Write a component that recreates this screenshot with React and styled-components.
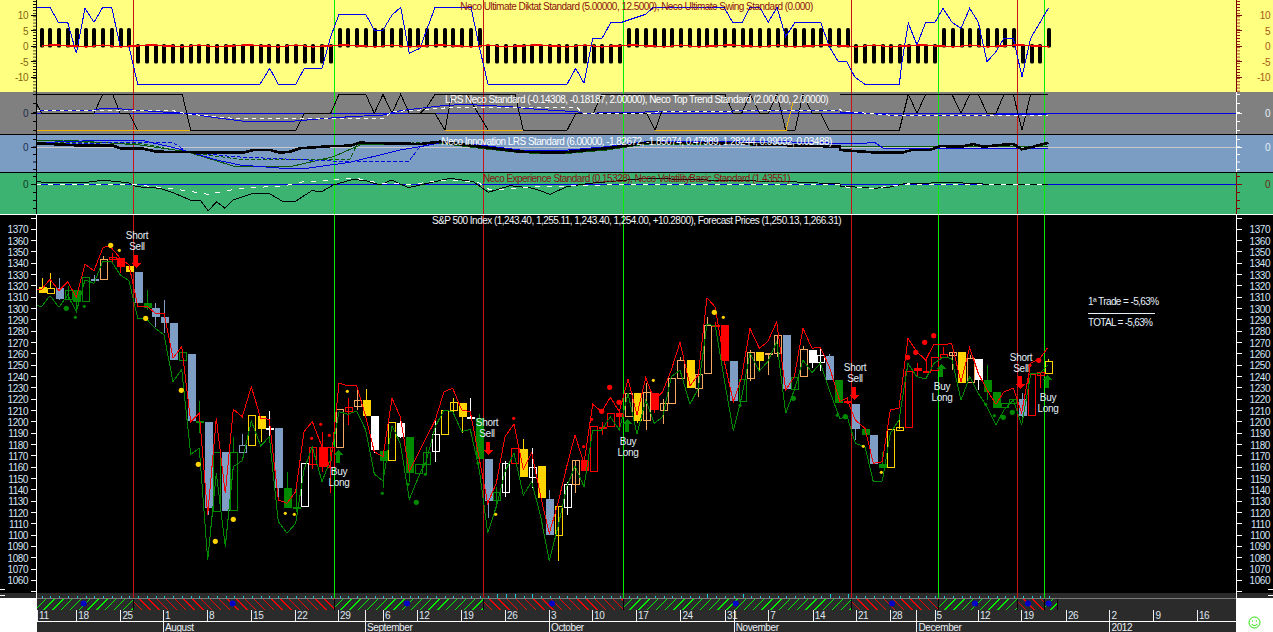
import React from 'react';
import styled, { createGlobalStyle } from 'styled-components';

const Global = createGlobalStyle`
  html, body { margin: 0; padding: 0; background: #fff; overflow: hidden; }
  body { font-family: "Liberation Sans", Arial, sans-serif; }
`;

const Page = styled.div`
  width: 1273px;
  height: 632px;
  display: flex;
  flex-direction: column;
  overflow: hidden;
`;

const Pane = styled.section`
  display: flex;
  box-sizing: border-box;
  height: ${p => p.$h}px;
  background: ${p => p.$bg};
  border-bottom: ${p => (p.$rule ? `1px solid ${p.$rule}` : 'none')};
`;

const Axis = styled.div`
  box-sizing: border-box;
  width: 37px;
  flex: none;
  padding-top: ${p => p.$pad}px;
  border-${p => (p.$side === 'left' ? 'right' : 'left')}: 1px solid ${p => p.$line};
  background-image: repeating-linear-gradient(to bottom, ${p => p.$line} 0 1px, transparent 1px ${p => p.$step}px);
  background-size: 3px ${p => p.$step}px;
  background-repeat: repeat-y;
  background-position: ${p => (p.$side === 'left' ? 'right' : 'left')} 0 top ${p => p.$off}px;
  background-color: ${p => p.$bg};
`;

const MainAxis = styled.div`
  box-sizing: border-box;
  width: 37px;
  flex: none;
  border-${p => (p.$side === 'left' ? 'right' : 'left')}: 1px solid #fff;
  background-image:
    linear-gradient(#fff, #fff),
    linear-gradient(#fff, #fff),
    linear-gradient(to bottom, #000 378px, #2b2b2b 378px);
  background-size: 5px 1px, 5px 1px, 100% 100%;
  background-repeat: no-repeat;
  background-position:
    ${p => p.$side} 0 top 374px,
    ${p => p.$side} 0 top 380px,
    0 0;
`;

const EndTick = styled.i`
  display: block;
  width: 5px;
  height: 1px;
  margin: 3px 0 4.63px ${p => (p.$side === 'left' ? 'auto' : '0')};
  background: #fff;
`;

const TickRow = styled.div`
  display: flex;
  align-items: center;
  height: ${p => p.$h}px;
  flex-direction: ${p => (p.$side === 'left' ? 'row' : 'row-reverse')};
`;

const TickLabel = styled.span`
  flex: 1;
  font-size: 10px;
  line-height: 10px;
  letter-spacing: -0.45px;
  text-align: right;
  padding-right: 3px;
  padding-top: 2px;
  color: ${p => p.$color};
`;

const TickMark = styled.i`
  display: block;
  flex: none;
  width: 5px;
  height: 1px;
  background: ${p => p.$color};
`;

const Plot = styled.div`
  position: relative;
  flex: 1;
  min-width: 0;
`;

const Title = styled.div`
  position: absolute;
  left: 0;
  right: 0;
  top: ${p => p.$top}px;
  text-align: center;
  font-size: 10px;
  letter-spacing: -0.53px;
  line-height: 12px;
  white-space: nowrap;
  color: ${p => p.$color};
  pointer-events: none;
`;

const Chart = styled.svg`
  display: block;
  width: 100%;
  height: 100%;
  shape-rendering: crispEdges;
`;

const Note = styled.text`
  font-size: 10px;
  letter-spacing: ${p => p.$track || -0.3}px;
  font-family: "Liberation Sans", Arial, sans-serif;
  fill: #e6f0fa;
  text-anchor: ${p => p.$anchor || 'middle'};
`;

const Footer = styled.footer`
  display: flex;
  height: 34px;
`;

const WhiteGutter = styled.div`
  width: 37px;
  flex: none;
  background: #fff;
`;

const SmileBox = styled.div`
  display: flex;
  justify-content: center;
  padding-top: 18px;
`;

const Strip = styled.div`
  flex: 1;
  min-width: 0;
  background: #2b2b2b;
  display: flex;
  flex-direction: column;
`;

const Hatch = styled.svg`
  display: block;
  width: 1199px;
  height: 12px;
  flex: none;
  shape-rendering: crispEdges;
`;

const Dates = styled.div`
  display: flex;
  height: 11px;
  border-bottom: 1px solid #fff;
`;

const DateCell = styled.div`
  box-sizing: border-box;
  width: ${p => p.$w}px;
  flex: none;
  border-left: 1px solid #f0f0f0;
  padding-left: 1px;
  font-size: 10px;
  letter-spacing: -0.4px;
  line-height: 12px;
  color: #dfe6ee;
  white-space: nowrap;
`;

const Months = styled.div`
  display: flex;
  height: 10px;
`;

const MonthCell = styled.div`
  box-sizing: border-box;
  width: ${p => p.$w}px;
  flex: none;
  border-left: 1px solid ${p => (p.$blank ? 'transparent' : '#f0f0f0')};
  padding-left: 1px;
  font-size: 10px;
  letter-spacing: -0.4px;
  line-height: 11px;
  color: #e8eef4;
  overflow: hidden;
  white-space: nowrap;
`;

/* ---------- data ---------- */
const barX = i => Math.round(41.7 + 8.76 * i);
const Z = (ox, oy, pts) => pts.map(([x, y]) => [ox + x / 3, oy + y / 3]);
const P = pts => pts.map(([x, y]) => `${x.toFixed(1)},${y.toFixed(1)}`).join(' ');

const VLINES = [[133, '#c81414'], [334, '#00f000'], [483, '#c81414'], [623, '#00f000'], [851, '#c81414'], [938, '#00f000'], [1017, '#c81414'], [1044, '#00f000']];

const Verticals = ({ y, h }) => VLINES.map(([x, c]) => <rect key={x} x={x} y={y} width="1" height={h} fill={c} />);

const sideOf = i => {
  if (i <= 10) return 1;
  if (i <= 33) return -1;
  if (i <= 50) return 1;
  if (i <= 66) return -1;
  if (i <= 92) return 1;
  if (i <= 102) return -1;
  if (i <= 111) return 1;
  if (i <= 114) return -1;
  return 1;
};
const BARS = Array.from({ length: 116 }, (_, i) => i);

const YBLUE = [
  ...Z(0, 0, [[109,22],[150,22],[175,67],[203,67],[229,160],[255,25],[282,67],[308,22],[335,22],[361,140],[387,140],[413,253],[780,253],[809,205],[835,253],[887,253],[913,205],[966,205],[992,110],[1017,43],[1097,43],[1123,90],[1149,90],[1176,45],[1202,22],[1228,160]]),
  ...Z(420, 0, [[0,145],[45,22],[153,22],[178,140],[204,253],[441,253],[467,205],[492,250],[518,115],[546,115],[573,67],[605,67],[677,43],[700,22],[912,22],[938,67],[967,67],[990,22],[1019,22],[1045,67],[1071,22],[1097,110],[1125,67],[1202,67],[1228,140],[1255,185]]),
  ...Z(840, 0, [[20,185],[45,232],[75,253],[178,253],[187,180],[205,70],[231,135],[257,67],[285,67],[309,25],[336,67],[363,85],[389,25],[415,67],[441,185],[468,155],[492,115],[520,115],[546,230],[572,115],[625,25]]),
];
const YRED = BARS.map(i => [barX(i), 46 + [0, -1, -1, 0, 0, 1, 0, -1, 0, 1, 0][i % 11]]);

const GRAY_BLACK = [
  Z(0, 0, [[109,283],[547,283],[572,391],[888,391],[913,340],[992,340],[1017,283],[1097,283],[1123,340],[1149,283],[1176,340],[1202,283],[1228,340],[1260,340]]),
  Z(0, 0, [[109,310],[125,340],[282,340],[308,283],[338,283],[361,340],[387,340],[413,391],[572,391]]),
  Z(420, 0, [[0,340],[20,322],[45,283],[285,283],[310,391],[441,391],[468,340],[520,340],[546,283],[915,283],[940,340],[965,340],[990,283],[1019,340],[1045,340],[1071,283],[1097,391],[1125,391],[1149,283],[1176,340],[1202,340],[1228,391],[1260,391]]),
  Z(420, 0, [[0,340],[45,340],[75,391],[95,283],[140,283],[205,391]]),
  Z(420, 0, [[520,340],[680,340],[705,391],[725,335],[915,335]]),
  Z(840, 0, [[0,391],[178,391],[205,283],[231,340],[257,283],[336,283],[363,340],[389,283],[415,283],[441,340],[468,340],[492,283],[520,283],[546,391],[572,283],[625,283]]),
  Z(840, 0, [[0,283],[625,283]]),
];
const GRAY_BLUE2 = [
  ...Z(0, 0, [[109,330],[282,330],[308,325],[340,325],[400,330],[520,338],[560,340],[625,350],[725,363],[885,363],[980,355],[1050,350],[1150,345],[1200,332]]),
  ...Z(420, 0, [[0,325],[60,318],[130,313],[270,320],[350,328],[470,335],[490,340],[720,335],[1260,330]]),
  ...Z(840, 0, [[0,338],[60,338],[145,345],[460,345],[625,342]]),
];
const GRAY_WHITE = [
  ...Z(0, 0, [[109,330],[520,332],[560,342],[700,355],[1150,355],[1175,335],[1260,330]]),
  ...Z(420, 0, [[100,322],[470,322],[490,340],[690,340],[720,335],[1260,330]]),
  ...Z(840, 0, [[0,332],[60,338],[145,345],[625,345]]),
];

const B_THICK = [
  ...Z(0, 0, [[109,430],[250,437],[340,437],[365,446],[430,446],[470,455],[600,457],[730,458],[760,450],[810,450],[840,458],[870,455],[900,445],[1000,438],[1050,437],[1080,428],[1260,432]]),
  ...Z(420, 0, [[60,425],[180,440],[300,455],[420,458],[560,445],[680,428],[900,430],[1080,435],[1260,440]]),
  ...Z(840, 0, [[0,450],[115,458],[185,458],[215,450],[270,450],[300,438],[365,440],[400,432],[430,440],[490,434],[520,432],[545,448],[580,440],[625,428]]),
];
const B_BLUE = [
  ...Z(0, 0, [[109,428],[270,422],[430,422],[530,445],[650,480],[720,495],[850,505],[920,505],[1050,487],[1200,450],[1260,440]]),
  ...Z(420, 0, [[60,428],[180,435],[300,450],[420,452],[560,440],[680,425],[900,425],[1080,425],[1260,430]]),
  ...Z(840, 0, [[0,432],[105,428],[130,445],[625,445]]),
];
const B_BLUED = Z(0, 0, [[109,430],[520,428],[560,455],[700,470],[1040,485],[1225,485],[1260,440]]);
const B_GREEN = [
  ...Z(0, 0, [[109,420],[190,420],[420,435],[560,455],[700,498],[880,498],[1000,470],[1080,435],[1260,430]]),
  ...Z(420, 0, [[60,430],[180,445],[300,458],[420,462],[560,450],[680,432],[900,433],[1080,437],[1260,436]]),
  ...Z(840, 0, [[0,440],[625,440]]),
];
const B_GREEND = Z(0, 0, [[109,426],[420,430],[550,455],[720,478],[1050,478],[1070,435],[1260,428]]);

const G_BLACK = [
  ...Z(0, 0, [[109,545],[165,549],[250,548],[310,541],[385,548],[410,560],[480,565],[520,578],[570,600],[600,600],[625,632],[650,605],[675,625],[700,600],[760,580],[810,582],[850,605],[885,605],[935,572],[965,575],[1000,555],[1060,538],[1100,543],[1140,555],[1175,540],[1225,563],[1260,555]]),
  ...Z(420, 0, [[90,535],[160,545],[205,577],[270,557],[340,565],[390,583],[440,560],[510,550],[680,535],[860,540],[1110,545],[1260,552]]),
  ...Z(840, 0, [[0,558],[100,565],[145,562],[200,550],[350,548],[430,552],[625,552]]),
];
const G_WHITE = [
  ...Z(0, 0, [[109,553],[390,553],[510,565],[625,583],[720,565],[850,558],[910,545],[1000,540],[1060,533],[1140,550],[1225,553],[1260,550]]),
  ...Z(420, 0, [[60,540],[170,545],[210,570],[360,560],[620,553],[1260,555]]),
  ...Z(840, 0, [[0,560],[100,565],[200,552],[400,553],[625,553]]),
];

const MAIN_RED = [
  ...Z(0, 220, [[112,210],[125,208],[150,178],[177,212],[203,185],[229,232],[255,133],[282,152],[308,85],[320,78],[335,85],[361,115],[387,135],[413,258],[440,258],[466,280],[492,280],[519,415],[545,380],[572,605],[598,580],[623,885],[649,595],[676,820],[700,568],[727,590],[754,500],[782,595],[808,598],[835,840],[861,850],[887,815],[912,635],[937,605],[966,680],[991,745],[1017,490],[1044,497],[1070,497],[1097,590],[1123,695],[1149,710],[1176,535],[1201,590],[1228,755]]),
  ...Z(420, 220, [[0,690],[18,655],[46,600],[72,515],[98,505],[125,570],[151,575],[178,716],[203,850],[229,790],[255,650],[282,612],[310,748],[335,697],[362,830],[388,940],[414,850],[440,740],[465,645],[492,730],[518,553],[545,575],[571,532],[598,575],[624,478],[651,585],[677,473],[703,540],[728,515],[754,450],[780,367],[810,497],[835,465],[861,233],[886,262],[912,420],[940,545],[965,470],[990,325],[1018,385],[1043,365],[1070,305],[1097,510],[1123,470],[1149,325],[1176,385],[1201,382],[1228,440]]),
  ...Z(840, 220, [[0,545],[20,535],[46,600],[75,625],[100,730],[127,725],[151,570],[177,565],[204,355],[230,395],[257,420],[282,372],[309,375],[335,370],[363,487],[389,383],[415,460],[441,510],[468,553],[492,515],[520,505],[545,578],[572,430],[600,415],[623,383]]),
];
const MAIN_GREEN = [
  ...Z(0, 220, [[112,257],[125,260],[150,227],[177,262],[203,225],[229,275],[255,180],[282,190],[308,125],[335,125],[361,165],[387,182],[413,295],[440,298],[466,325],[492,345],[519,485],[545,448],[572,703],[598,685],[623,1020],[649,760],[676,980],[700,740],[727,722],[754,603],[782,678],[808,650],[835,905],[861,940],[887,910],[912,750],[937,680],[966,785],[991,720],[1017,575],[1044,583],[1070,573],[1097,630],[1123,762],[1149,783],[1176,618],[1201,670],[1228,838]]),
  ...Z(420, 220, [[0,760],[18,725],[46,620],[72,570],[98,575],[125,635],[151,628],[178,750],[203,938],[229,860],[255,755],[282,700],[310,825],[335,785],[362,890],[388,1023],[414,920],[440,800],[465,738],[492,800],[518,630],[545,630],[571,590],[598,630],[624,520],[651,643],[677,540],[703,610],[728,590],[754,470],[780,450],[810,553],[835,505],[861,312],[886,318],[912,475],[940,633],[965,530],[990,400],[1018,453],[1043,425],[1070,365],[1097,580],[1123,510],[1149,420],[1176,458],[1201,430],[1228,510]]),
  ...Z(840, 220, [[0,597],[20,585],[46,670],[75,680],[100,785],[127,783],[151,640],[177,600],[204,430],[230,470],[257,477],[282,430],[309,412],[335,415],[363,540],[389,470],[415,520],[441,560],[468,615],[492,570],[520,540],[545,615],[572,462],[600,460],[623,435]]),
];

const COL = { y: '#ffd400', b: '#7f9ec6', g: '#008a00', r: '#ff0000', w: '#ffffff', o: '#f4a860' };

const C1 = [
  [125,202,218,175,218,'Y'],[150,205,221,160,205,'y'],[177,205,237,175,240,'B'],[203,211,237,198,240,'g'],[229,211,245,211,275,'G'],[255,172,245,0,0,'g'],[282,178,180,165,190,'b'],[308,118,179,108,118,'o'],[335,112,119,100,125,'r'],[361,113,140,113,160,'R'],[387,138,155,0,0,'Y'],
  [413,156,248,0,0,'B'],[440,250,264,210,270,'G'],[466,265,291,250,320,'B'],[492,291,308,240,340,'B'],[519,309,419,0,0,'B'],[545,397,422,0,0,'g'],[572,402,603,0,0,'B'],[598,603,605,544,640,'g'],[623,606,863,606,885,'B'],[649,697,875,0,0,'g'],[676,697,873,0,0,'B'],[700,697,871,650,697,'g'],[727,676,697,642,676,'b'],[754,586,676,0,0,'y'],[782,589,627,589,665,'Y'],[808,625,628,573,650,'w'],[835,625,803,625,835,'B'],[861,805,863,757,805,'G'],[887,860,863,790,875,'g'],[912,730,859,0,0,'w'],[937,680,730,680,748,'r'],[966,680,741,635,755,'R'],[991,682,742,682,820,'r'],
  [1017,568,683,0,0,'o'],[1044,560,571,535,615,'r'],[1070,541,560,505,570,'o'],[1097,541,588,508,541,'Y'],[1123,588,689,588,700,'W'],[1149,693,722,693,805,'G'],[1174,607,722,0,0,'y'],[1201,609,651,590,655,'W'],[1228,652,758,652,785,'G'],[1254,731,758,0,0,'g'],
];
const C2 = [
  [18,695,730,680,765,'g'],[46,643,695,597,725,'w'],[72,571,643,0,0,'y'],[98,547,571,535,585,'y'],[125,549,590,549,640,'Y'],[151,592,595,534,598,'w'],[178,595,716,582,595,'G'],
  [203,717,842,717,893,'B'],[229,817,842,800,865,'g'],[255,730,818,723,832,'w'],[282,685,730,0,0,'r'],[310,687,770,657,687,'Y'],[335,740,770,685,805,'w'],[362,738,833,0,0,'Y'],[388,837,944,810,837,'B'],[414,859,946,859,1022,'y'],[440,793,862,785,885,'w'],[465,721,793,721,818,'o'],[492,720,752,0,0,'R'],[518,619,754,0,0,'r'],[545,620,622,605,645,'r'],[571,580,620,0,0,'r'],[598,579,590,579,625,'R'],
  [624,520,590,0,0,'o'],[651,519,602,519,610,'Y'],[677,517,601,490,630,'o'],[703,519,570,519,578,'R'],[728,550,572,537,612,'o'],[754,475,550,0,0,'o'],[780,421,475,410,421,'o'],[810,420,505,0,0,'Y'],[835,462,505,450,530,'o'],[861,315,460,290,315,'o'],[886,315,318,305,330,'r'],[912,315,422,0,0,'R'],[940,423,542,0,0,'B'],[965,476,542,0,0,'g'],[990,397,475,390,482,'o'],[1018,396,422,396,455,'Y'],[1043,398,401,398,465,'o'],[1070,345,398,345,412,'o'],[1097,345,506,0,0,'B'],[1123,470,506,0,0,'g'],[1149,388,470,378,388,'o'],[1176,389,429,389,445,'W'],[1201,406,428,388,452,'w'],[1228,408,479,403,408,'B'],[1254,480,548,0,0,'G'],
];
const C3 = [
  [20,543,546,530,552,'r'],[46,552,627,552,660,'B'],[75,628,644,0,0,'G'],[100,645,732,0,0,'B'],[127,733,743,695,743,'G'],[151,628,743,0,0,'y'],[177,620,628,592,628,'y'],[204,452,620,0,0,'r'],[230,445,452,430,470,'R'],[257,452,454,410,452,'r'],[282,412,452,0,0,'r'],
  [309,403,412,380,403,'r'],[335,397,407,397,450,'o'],[363,396,488,0,0,'Y'],[389,415,488,405,415,'o'],[415,418,480,418,510,'W'],[441,480,515,435,540,'G'],[468,517,563,0,0,'G'],[492,550,563,0,0,'g'],[517,538,550,0,0,'g'],
  [545,537,587,520,610,'B'],[572,462,586,0,0,'r'],[600,455,465,455,505,'r'],[624,422,458,417,422,'y'],
];
const candles = (off, list) => list.map(([zx, t, b, wt, wb, k], n) => {
  const x = Math.round(off + zx / 3);
  const filled = k === k.toUpperCase();
  const c = COL[k.toLowerCase()];
  const y1 = 220 + t / 3, y2 = 220 + b / 3;
  return (
    <g key={`${off}-${n}`}>
      {wt ? <line x1={x + 0.5} x2={x + 0.5} y1={220 + wt / 3} y2={220 + wb / 3} stroke={c} /> : null}
      {filled
        ? <rect x={x - 3} y={y1} width="8" height={Math.max(y2 - y1, 2)} fill={c} />
        : <rect x={x - 3} y={Math.round(y1) + 0.5} width="7" height={Math.max(Math.round(y2 - y1), 1)} fill="none" stroke={c} transform="translate(0.5 0)" />}
    </g>
  );
});

const DOTS = [
  ...Z(0, 220, [[332,76],[358,91],[437,295],[544,511],[595,733],[646,964],[700,898],[856,880],[883,883],[1042,514]]).map((p, i) => [...p, [3,2,3,3,3,3,3,2,2,2][i], '#ffd400']),
  ...Z(0, 220, [[199,265],[1249,847]]).map(p => [...p, 3, '#008a00']),
  ...Z(0, 220, [[226,292],[253,259],[1147,820],[1224,793]]).map(p => [...p, 2, '#008a00']),
  ...Z(0, 220, [[935,655],[962,613],[988,646]]).map(p => [...p, 2, '#ff0000']),
  ...Z(420, 220, [[16,763],[174,730],[960,556],[1252,586]]).map(p => [...p, 2, '#008a00']),
  ...Z(420, 220, [[1120,535]]).map(p => [...p, 3, '#008a00']),
  ...Z(420, 220, [[281,595],[491,680],[515,598]]).map(p => [...p, 2, '#ff0000']),
  ...Z(420, 220, [[569,502],[545,574],[597,547]]).map(p => [...p, 3, '#ff0000']),
  ...Z(420, 220, [[227,883],[700,481],[910,292]]).map(p => [...p, 2, '#ffd400']),
  ...Z(420, 220, [[883,277]]).map(p => [...p, 3, '#ffd400']),
  ...Z(840, 220, [[16,590],[490,592],[517,577]]).map(p => [...p, 3, '#008a00']),
  ...Z(840, 220, [[437,553],[463,587]]).map(p => [...p, 2, '#008a00']),
  ...Z(840, 220, [[70,679],[124,757]]).map(p => [...p, 2, '#ffd400']),
  ...Z(840, 220, [[203,412],[227,397],[254,367],[281,347],[596,421]]).map(p => [...p, 3, '#ff0000']),
  ...Z(840, 220, [[570,436]]).map(p => [...p, 2, '#ff0000']),
];

const DownArrow = ({ x, y }) => <polygon fill="#ff0000" points={`${x-2},${y} ${x+2},${y} ${x+2},${y+8} ${x+5},${y+8} ${x},${y+13} ${x-5},${y+8} ${x-2},${y+8}`} />;
const UpArrow = ({ x, y }) => <polygon fill="#008a00" points={`${x-2},${y+13} ${x+2},${y+13} ${x+2},${y+5} ${x+5},${y+5} ${x},${y} ${x-5},${y+5} ${x-2},${y+5}`} />;

const Signal = ({ x, y, a, b, anchor }) => (
  <>
    <Note x={x} y={y} $anchor={anchor}>{a}</Note>
    <Note x={x} y={y + 11} $anchor={anchor}>{b}</Note>
  </>
);

const PRICES = Array.from({ length: 32 }, (_, i) => 1370 - i * 10);

const DATE_STOPS = [[37,'11'],[76.3,'18'],[120.4,'25'],[163,'1'],[207,'8'],[251,'15'],[295,'22'],[338,'29'],[365,''],[383,'6'],[417,'12'],[461,'19'],[505,'26'],[549,'3'],[592,'10'],[636,'17'],[680.4,'24'],[725,'31'],[733.7,''],[768.4,'7'],[812.8,'14'],[856,'21'],[890,'28'],[916.5,''],[934.7,'5'],[978,'12'],[1021.5,'19'],[1066,'26'],[1109.5,'2'],[1153.5,'9'],[1197,'16']];
const MONTH_STOPS = [[37,''],[163,'August'],[365,'September'],[549,'October'],[733.7,'November'],[916.5,'December'],[1109.5,'2012']];
const widths = (stops, i) => (i + 1 < stops.length ? stops[i + 1][0] : 1236) - stops[i][0];

const HATCH = [[37,133,1],[133,334,-1],[334,483,1],[483,623,-1],[623,851,1],[851,938,-1],[938,1017,1],[1017,1044,-1],[1044,1057,1]];
const hatchLines = () => {
  const out = [];
  HATCH.forEach(([a, b, s]) => {
    for (let x = a - 11; x < b; x += 8.8) {
      const x2 = x + 11;
      const cx1 = Math.max(x, a), cx2 = Math.min(x2, b);
      if (cx2 <= cx1) continue;
      const yA = s > 0 ? 12 - (cx1 - x) : 1 + (cx1 - x);
      const yB = s > 0 ? 12 - (cx2 - x) : 1 + (cx2 - x);
      out.push(<line key={`${a}-${x}`} x1={cx1 - 37} x2={cx2 - 37} y1={yA} y2={yB} stroke={s > 0 ? '#00f000' : '#f00000'} />);
    }
  });
  return out;
};
const SEPS = [133, 334, 483, 623, 851, 938, 1017, 1044, 1057];
const BLUE_DOTS = [83.7, 232.6, 407, 552, 735.7, 892, 975, 1028, 1048.6];
const TALL = [52, 53, 54, 56, 76, 80, 90, 92];

const Scale = ({ side, line, bg, color, step, off, pad, h, labels }) => (
  <Axis $side={side} $line={line} $bg={bg} $step={step} $off={off} $pad={pad}>
    {labels.map(l => (
      <TickRow key={l} $h={h} $side={side}>
        <TickLabel $color={color}>{l}</TickLabel>
        <TickMark $color={line} />
      </TickRow>
    ))}
  </Axis>
);

const PriceScale = ({ side }) => (
  <MainAxis $side={side}>
    <EndTick $side={side} />
    {[...PRICES, ''].map((l, i) => (
      <TickRow key={i} $h={11.34} $side={side}>
        <TickLabel $color="#d6e6fa">{l}</TickLabel>
        <TickMark $color="#fff" />
      </TickRow>
    ))}
  </MainAxis>
);

const Y10 = ['10', '5', '0', '-5', '-10'];

export default function App() {
  return (
    <Page>
      <Global />
      <Pane $h={92} $bg="#ffff80">
        <Scale side="left" line="#000" bg="#ffff80" color="#85650f" step={3.1} off={1} pad={7.25} h={15.5} labels={Y10} />
        <Plot>
          <Chart viewBox="37 0 1199 92">
            <Verticals y={0} h={92} />
            {BARS.map(i => (
              <rect key={i} x={barX(i) - 2} y={sideOf(i) > 0 ? 28 : 44} width="4" height="19.5" rx="1.6" fill="#000" shapeRendering="auto" />
            ))}
            <polyline points={P(YBLUE)} fill="none" stroke="#0000f0" />
            <polyline points={P(YRED)} fill="none" stroke="#f00000" strokeWidth="1.2" />
          </Chart>
          <Title $top={1} $color="#8b1010">Neco Ultimate Diktat Standard (5.00000, 12.5000), Neco Ultimate Swing Standard (0.000)</Title>
        </Plot>
        <Scale side="right" line="#800000" bg="#ffff80" color="#a8581a" step={3.1} off={1} pad={7.25} h={15.5} labels={Y10} />
      </Pane>

      <Pane $h={43} $bg="#808080" $rule="#000">
        <Scale side="left" line="#000" bg="#808080" color="#1f2f4a" step={9} off={2} pad={15.5} h={11} labels={['0']} />
        <Plot>
          <Chart viewBox="37 92 1199 42">
            <Verticals y={92} h={42} />
            <line x1="37" x2="1236" y1="113.5" y2="113.5" stroke="#0000e0" />
            {GRAY_BLACK.map((l, i) => <polyline key={i} points={P(l)} fill="none" stroke="#000" />)}
            <polyline points="37,130.5 190,130.5" fill="none" stroke="#f0b400" />
            <polyline points="445,130.5 523,130.5" fill="none" stroke="#f0b400" />
            <polyline points="655,130.5 786,130.5 793,102" fill="none" stroke="#f0b400" />
            <polyline points={P(GRAY_BLUE2)} fill="none" stroke="#0000e0" />
            <polyline points={P(GRAY_WHITE)} fill="none" stroke="#fff" strokeDasharray="4 4" />
          </Chart>
          <Title $top={2} $color="#ffffff">LRS Neco Standard (-0.14308, -0.18187, 2.00000), Neco Top Trend Standard (2.00000, 2.00000)</Title>
        </Plot>
        <Scale side="right" line="#ffffff" bg="#808080" color="#e6eef6" step={9} off={2} pad={15.5} h={11} labels={['0']} />
      </Pane>

      <Pane $h={38} $bg="#7b9dc4" $rule="#000">
        <Scale side="left" line="#000" bg="#7b9dc4" color="#1f2f4a" step={7.5} off={4} pad={6.5} h={11} labels={['0']} />
        <Plot>
          <Chart viewBox="37 135 1199 37">
            <Verticals y={135} h={37} />
            <line x1="37" x2="1236" y1="147.5" y2="147.5" stroke="#c8c8c8" />
            <polyline points={P(B_GREEN)} fill="none" stroke="#0a5a0a" />
            <polyline points={P(B_GREEND)} fill="none" stroke="#0a5a0a" strokeDasharray="4 2" />
            <polyline points={P(B_BLUE)} fill="none" stroke="#0000e0" />
            <polyline points={P(B_BLUED)} fill="none" stroke="#0000e0" strokeDasharray="4 2" />
            <polyline points={P(B_THICK)} fill="none" stroke="#000" strokeWidth="2.6" />
          </Chart>
          <Title $top={1} $color="#ffffff">Neco Innovation LRS Standard (6.00000, -1.82672, -1.85074, 0.47989, 1.28244, 0.99032, 0.03488)</Title>
        </Plot>
        <Scale side="right" line="#ffffff" bg="#7b9dc4" color="#e6eef6" step={7.5} off={4} pad={6.5} h={11} labels={['0']} />
      </Pane>

      <Pane $h={42} $bg="#3cb371" $rule="#fff">
        <Scale side="left" line="#000" bg="#3cb371" color="#143a24" step={8} off={3} pad={5.5} h={11} labels={['0']} />
        <Plot>
          <Chart viewBox="37 173 1199 41">
            <Verticals y={173} h={41} />
            <line x1="37" x2="1236" y1="184.5" y2="184.5" stroke="#0000e0" />
            <polyline points={P(G_BLACK)} fill="none" stroke="#000" />
            <polyline points={P(G_WHITE)} fill="none" stroke="#fff" strokeDasharray="5 7" />
          </Chart>
          <Title $top={0} $color="#8b1010">Neco Experience Standard (0.15328), Neco VolatilityBasic Standard (1.43551)</Title>
        </Plot>
        <Scale side="right" line="#800000" bg="#3cb371" color="#6a2a1a" step={8} off={3} pad={5.5} h={11} labels={['0']} />
      </Pane>

      <Pane $h={383} $bg="#000">
        <PriceScale side="left" />
        <Plot>
          <Chart viewBox="37 215 1199 383">
            <rect x="37" y="593" width="1199" height="5" fill="#2b2b2b" />
            <Verticals y={215} h={383} />
            {BARS.map(i => (
              <rect key={i} x={barX(i)} y={TALL.includes(i) ? 594 : 596} width="1" height={TALL.includes(i) ? 4 : 2} fill="#20c8d8" />
            ))}
            {candles(0, C1)}
            {candles(420, C2)}
            {candles(840, C3)}
            <polyline points={P(MAIN_GREEN)} fill="none" stroke="#008a00" />
            <polyline points={P(MAIN_RED)} fill="none" stroke="#ff0000" />
            {DOTS.map(([x, y, r, c], i) => <circle key={i} cx={x} cy={y} r={r === 3 ? 2.6 : 1.6} fill={c} shapeRendering="auto" />)}
            <DownArrow x={136} y={255} />
            <DownArrow x={488} y={442} />
            <DownArrow x={854} y={387} />
            <DownArrow x={1020} y={376} />
            <UpArrow x={338} y={450} />
            <UpArrow x={627} y={419} />
            <UpArrow x={941} y={364} />
            <UpArrow x={1047} y={375} />
            <Signal x={137} y={239} a="Short" b="Sell" />
            <Signal x={339} y={475} a="Buy" b="Long" />
            <Signal x={487} y={426} a="Short" b="Sell" />
            <Signal x={628} y={445} a="Buy" b="Long" />
            <Signal x={855} y={371} a="Short" b="Sell" />
            <Signal x={942} y={390} a="Buy" b="Long" />
            <Signal x={1021} y={361} a="Short" b="Sell" />
            <Signal x={1048} y={401} a="Buy" b="Long" />
            <Note x={1088} y={305} $anchor="start" $track={-0.6}>1ª Trade = -5,63%</Note>
            <rect x="1088" y="313" width="67" height="1" fill="#e6f0fa" />
            <Note x={1088} y={326} $anchor="start" $track={-0.7}>TOTAL = -5,63%</Note>
          </Chart>
          <Title $top={0} $color="#f0f4f8">S&amp;P 500 Index (1,243.40, 1,255.11, 1,243.40, 1,254.00, +10.2800), Forecast Prices (1,250.13, 1,266.31)</Title>
        </Plot>
        <PriceScale side="right" />
      </Pane>

      <Footer>
        <WhiteGutter />
        <Strip>
          <Hatch viewBox="0 0 1199 12">
            <rect x="0" y="0" width="1199" height="1" fill="#7a7a7a" />
            {hatchLines()}
            {SEPS.map(x => <rect key={x} x={x - 37} y="1" width="1" height="11" fill="#000" />)}
            {BLUE_DOTS.map(x => <circle key={x} cx={x - 37} cy="5.5" r="3" fill="#0000c8" shapeRendering="auto" />)}
          </Hatch>
          <Dates>
            {DATE_STOPS.map(([x, l], i) => <DateCell key={x} $w={widths(DATE_STOPS, i)}>{l}</DateCell>)}
          </Dates>
          <Months>
            {MONTH_STOPS.map(([x, l], i) => <MonthCell key={x} $blank={!l} $w={widths(MONTH_STOPS, i)}>{l}</MonthCell>)}
          </Months>
        </Strip>
        <WhiteGutter>
          <SmileBox>
            <svg width="13" height="13" viewBox="0 0 13 13" fill="none" stroke="#22e000">
              <circle cx="6.5" cy="6.5" r="5.5" />
              <path d="M3.5 8c1.5 2 4.5 2 6 0" />
              <path d="M4.5 4.5v1M8.5 4.5v1" />
            </svg>
          </SmileBox>
        </WhiteGutter>
      </Footer>
    </Page>
  );
}
